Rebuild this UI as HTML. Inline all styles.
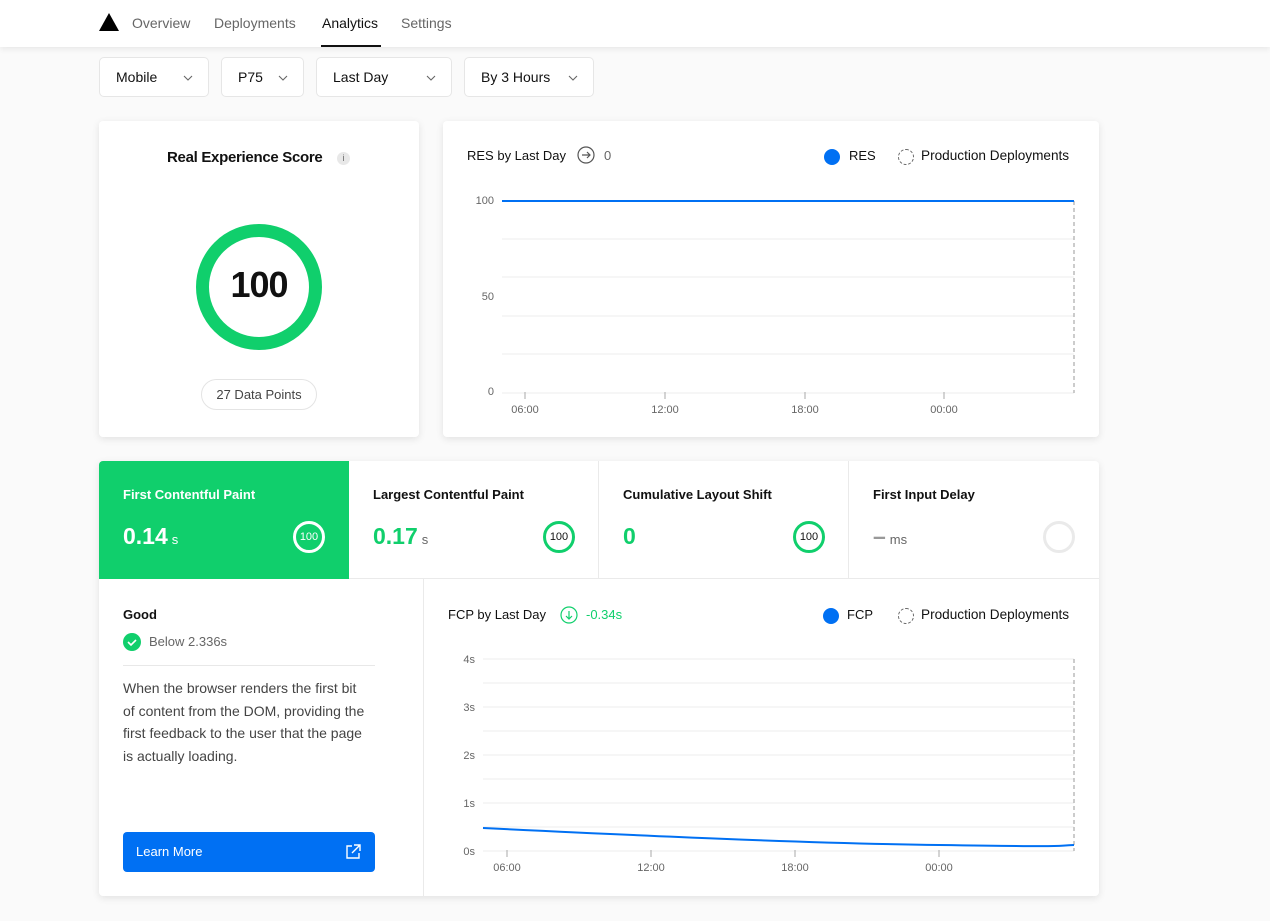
<!DOCTYPE html>
<html><head><meta charset="utf-8"><style>
*{box-sizing:border-box;margin:0;padding:0}
body{width:1270px;height:921px;background:#fafafa;font-family:"Liberation Sans",sans-serif;font-size:14px;color:#111;position:relative;overflow:hidden}
.a{position:absolute}
.nav{left:0;top:0;width:1270px;height:47px;background:#fff;box-shadow:0 2px 6px rgba(0,0,0,.08)}
.nav span{position:absolute;top:15px;font-size:14px;color:#666}
.dd{top:57px;height:40px;background:#fff;border:1px solid #e6e6e6;border-radius:5px;font-size:14px;padding:11px 0 0 16px}
.dd svg{position:absolute;right:14px;top:16px}
.card{background:#fff;border-radius:4px;box-shadow:0 2px 8px rgba(0,0,0,.1)}
.t{font-size:13px;color:#666}
.tile{top:0;height:118px;width:250px;border-right:1px solid #eaeaea;border-bottom:1px solid #eaeaea}
.tile .h{position:absolute;left:24px;top:26px;font-weight:bold;font-size:13px}
.tile .v{position:absolute;left:24px;top:62px;font-weight:bold;font-size:23px;color:#10cf6c}
.tile .v small{font-size:13px;font-weight:normal;color:#666;margin-left:4px}
.tile .c{position:absolute;left:194px;top:60px;width:32px;height:32px;border-radius:50%;border:3px solid #10cf6c;font-size:11px;text-align:center;line-height:26px;color:#111}
</style></head><body>
<div class="a nav">
<svg class="a" style="left:99px;top:13px" width="20" height="18"><polygon points="10,0 20,18 0,18" fill="#000"/></svg>
<span style="left:132px">Overview</span><span style="left:214px">Deployments</span><span style="left:322px;color:#111">Analytics</span><span style="left:401px">Settings</span>
<div class="a" style="left:321px;top:45px;width:60px;height:2px;background:#111"></div>
</div>
<div class="a dd" style="left:99px;width:110px">Mobile<svg width="12" height="8"><path d="M2 2l4 4 4-4" stroke="#666" fill="none" stroke-width="1.1"/></svg></div>
<div class="a dd" style="left:221px;width:83px">P75<svg width="12" height="8"><path d="M2 2l4 4 4-4" stroke="#666" fill="none" stroke-width="1.1"/></svg></div>
<div class="a dd" style="left:316px;width:136px">Last Day<svg width="12" height="8"><path d="M2 2l4 4 4-4" stroke="#666" fill="none" stroke-width="1.1"/></svg></div>
<div class="a dd" style="left:464px;width:130px">By 3 Hours<svg width="12" height="8"><path d="M2 2l4 4 4-4" stroke="#666" fill="none" stroke-width="1.1"/></svg></div>

<div class="a card" style="left:99px;top:121px;width:320px;height:316px">
<div class="a" style="left:68px;top:28px;font-weight:bold;font-size:15px;letter-spacing:-0.3px">Real Experience Score</div>
<div class="a" style="left:238px;top:31px;width:13px;height:13px;border-radius:50%;background:#e8e8e8;font-size:9px;text-align:center;line-height:13px;color:#666">i</div>
<svg class="a" style="left:96px;top:102px" width="128" height="128"><circle cx="64" cy="64" r="56.5" fill="none" stroke="#10cf6c" stroke-width="13"/></svg>
<div class="a" style="left:96px;top:143px;width:128px;text-align:center;font-size:36px;font-weight:bold;letter-spacing:-1px">100</div>
<div class="a" style="left:102px;top:258px;width:116px;height:31px;border:1px solid #e4e4e4;border-radius:16px;text-align:center;line-height:29px;font-size:13px;color:#444">27 Data Points</div>
</div>

<div class="a card" style="left:443px;top:121px;width:656px;height:316px">
<div class="a" style="left:24px;top:27px;font-size:13px">RES by Last Day</div>
<svg class="a" style="left:134px;top:25px" width="20" height="20"><circle cx="9" cy="9" r="8" fill="none" stroke="#555" stroke-width="1.2"/><path d="M5 9h8M10 6l3 3-3 3" stroke="#555" fill="none" stroke-width="1.2"/></svg>
<div class="a t" style="left:161px;top:27px">0</div>
<div class="a" style="left:381px;top:28px;width:16px;height:16px;border-radius:50%;background:#0070f3"></div>
<div class="a" style="left:406px;top:27px;font-size:13px">RES</div>
<div class="a" style="left:455px;top:28px;width:16px;height:16px;border-radius:50%;border:1px dashed #666"></div>
<div class="a" style="left:478px;top:27px;font-size:13.6px">Production Deployments</div>
<svg class="a" style="left:0;top:0" width="656" height="316">
<g stroke="#eee"><line x1="59" x2="631" y1="118" y2="118"/><line x1="59" x2="631" y1="156" y2="156"/><line x1="59" x2="631" y1="195" y2="195"/><line x1="59" x2="631" y1="233" y2="233"/><line x1="59" x2="631" y1="272" y2="272"/></g>
<line x1="631" x2="631" y1="80" y2="272" stroke="#999" stroke-dasharray="4,3"/>
<line x1="59" x2="631" y1="80" y2="80" stroke="#0070f3" stroke-width="2"/>
<g stroke="#aaa"><line x1="82" x2="82" y1="271" y2="278"/><line x1="222" x2="222" y1="271" y2="278"/><line x1="362" x2="362" y1="271" y2="278"/><line x1="501" x2="501" y1="271" y2="278"/></g>
<g font-size="11" fill="#666" font-family="Liberation Sans"><text x="51" y="83" text-anchor="end">100</text><text x="51" y="179" text-anchor="end">50</text><text x="51" y="274" text-anchor="end">0</text>
<text x="82" y="292" text-anchor="middle">06:00</text><text x="222" y="292" text-anchor="middle">12:00</text><text x="362" y="292" text-anchor="middle">18:00</text><text x="501" y="292" text-anchor="middle">00:00</text></g>
</svg>
</div>

<div class="a card" style="left:99px;top:461px;width:1000px;height:435px">
<div class="a tile" style="left:0;background:#10cf6c;border-radius:4px 0 0 0;border-color:#10cf6c"><div class="h" style="color:#fff">First Contentful Paint</div><div class="v" style="color:#fff">0.14<small style="color:#fff">s</small></div><div class="c" style="border-color:#fff;color:#fff">100</div></div>
<div class="a tile" style="left:250px"><div class="h">Largest Contentful Paint</div><div class="v">0.17<small>s</small></div><div class="c">100</div></div>
<div class="a tile" style="left:500px"><div class="h">Cumulative Layout Shift</div><div class="v">0</div><div class="c">100</div></div>
<div class="a tile" style="left:750px;border-right:0"><div class="h">First Input Delay</div><div class="v" style="color:#999">–<small>ms</small></div><div class="c" style="border-color:#eaeaea"></div></div>
<div class="a" style="left:324px;top:118px;width:1px;height:317px;background:#eaeaea"></div>
<div class="a" style="left:24px;top:146px;font-weight:bold;font-size:13px">Good</div>
<svg class="a" style="left:24px;top:172px" width="18" height="18"><circle cx="9" cy="9" r="9" fill="#10cf6c"/><path d="M5 9l3 3 5-5" stroke="#fff" stroke-width="1.6" fill="none"/></svg>
<div class="a t" style="left:50px;top:173px">Below 2.336s</div>
<div class="a" style="left:24px;top:204px;width:252px;height:1px;background:#e8e8e8"></div>
<div class="a" style="left:24px;top:216px;white-space:nowrap;font-size:14px;line-height:22.5px;color:#444">When the browser renders the first bit<br>of content from the DOM, providing the<br>first feedback to the user that the page<br>is actually loading.</div>
<div class="a" style="left:24px;top:371px;width:252px;height:40px;background:#0070f3;border-radius:4px;color:#fff;font-size:13px;padding:12px 0 0 13px">Learn More
<svg class="a" style="right:13px;top:11px" width="18" height="18"><path d="M8 3H3v12h12v-5M10 2h6v6M16 2l-8 8" stroke="#fff" stroke-width="1.4" fill="none"/></svg></div>
<div class="a" style="left:349px;top:146px;font-size:13px">FCP by Last Day</div>
<svg class="a" style="left:461px;top:145px" width="20" height="20"><circle cx="9" cy="9" r="8" fill="none" stroke="#10cf6c" stroke-width="1.2"/><path d="M9 5v8M6 10l3 3 3-3" stroke="#10cf6c" fill="none" stroke-width="1.2"/></svg>
<div class="a" style="left:487px;top:146px;font-size:13px;color:#10cf6c">-0.34s</div>
<div class="a" style="left:724px;top:147px;width:16px;height:16px;border-radius:50%;background:#0070f3"></div>
<div class="a" style="left:748px;top:146px;font-size:13px">FCP</div>
<div class="a" style="left:799px;top:147px;width:16px;height:16px;border-radius:50%;border:1px dashed #666"></div>
<div class="a" style="left:822px;top:146px;font-size:13.6px">Production Deployments</div>
<svg class="a" style="left:0;top:0" width="1000" height="435">
<g stroke="#eee"><line x1="384" x2="975" y1="198" y2="198"/><line x1="384" x2="975" y1="222" y2="222"/><line x1="384" x2="975" y1="246" y2="246"/><line x1="384" x2="975" y1="270" y2="270"/><line x1="384" x2="975" y1="294" y2="294"/><line x1="384" x2="975" y1="318" y2="318"/><line x1="384" x2="975" y1="342" y2="342"/><line x1="384" x2="975" y1="366" y2="366"/><line x1="384" x2="975" y1="390" y2="390"/></g>
<line x1="975" x2="975" y1="198" y2="390" stroke="#999" stroke-dasharray="4,3"/>
<path d="M384 367 C550 375 700 382 840 384 S950 385 975 384" stroke="#0070f3" stroke-width="2" fill="none"/>
<g stroke="#aaa"><line x1="408" x2="408" y1="389" y2="396"/><line x1="552" x2="552" y1="389" y2="396"/><line x1="696" x2="696" y1="389" y2="396"/><line x1="840" x2="840" y1="389" y2="396"/></g>
<g font-size="11" fill="#666" font-family="Liberation Sans"><text x="376" y="202" text-anchor="end">4s</text><text x="376" y="250" text-anchor="end">3s</text><text x="376" y="298" text-anchor="end">2s</text><text x="376" y="346" text-anchor="end">1s</text><text x="376" y="394" text-anchor="end">0s</text>
<text x="408" y="410" text-anchor="middle">06:00</text><text x="552" y="410" text-anchor="middle">12:00</text><text x="696" y="410" text-anchor="middle">18:00</text><text x="840" y="410" text-anchor="middle">00:00</text></g>
</svg>
</div>
</body></html>
